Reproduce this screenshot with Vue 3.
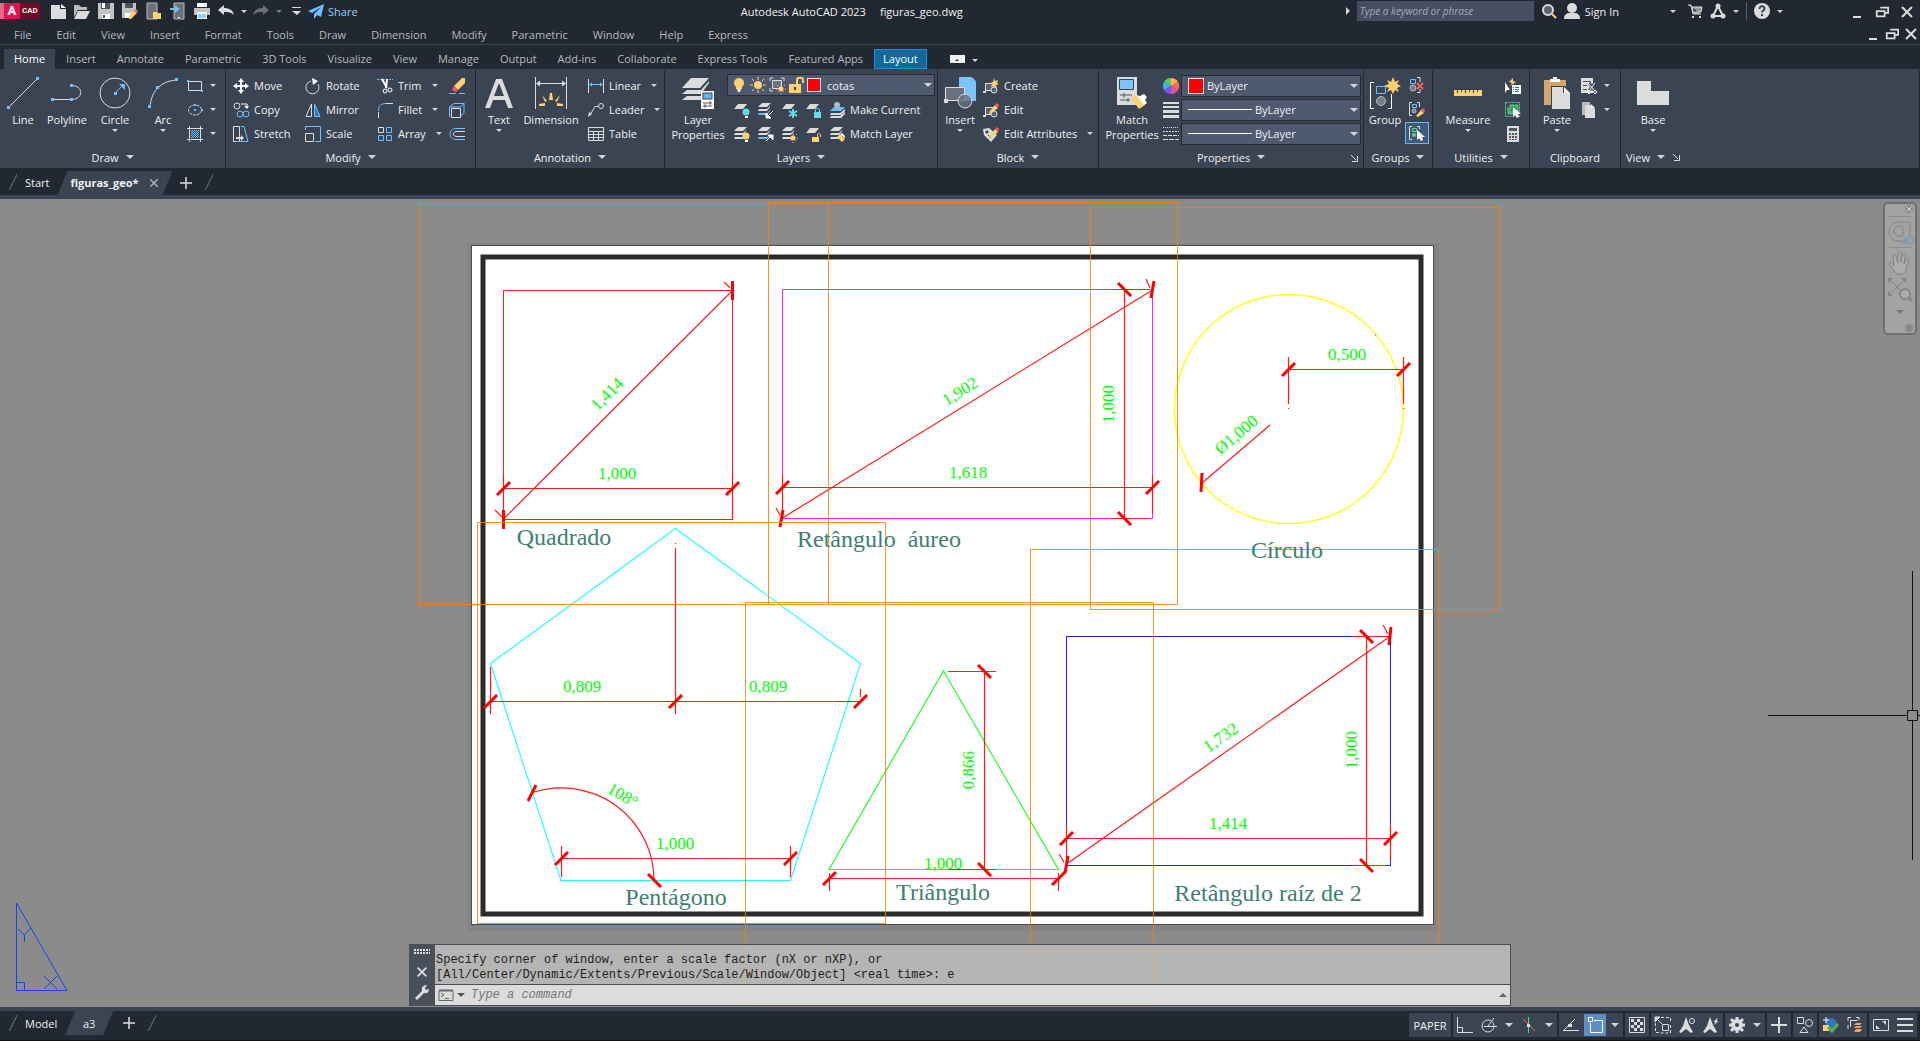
<script setup>
import { h, ref } from 'vue'

const W = '#dcdcdc'
const B = '#6cc0ff'
const Y = '#ffcf70'
const R = '#ff5a5a'
const G = '#5fd38d'

const stack = (c1, c2, c3) =>
  `<path d="M5 1H14L10 5H1Z" fill="${c1}"/><path d="M2 7H10L13 4V5L10 9H1Z" fill="${c2}"/><path d="M2 11H10L13 8V9L10 13H1Z" fill="${c3}"/>`
const single = `<path d="M5 2H14L10 7H1Z" fill="${W}"/>`
const pencil = `<path d="M7 9l5-6 3 3-6 5-3 1z" fill="${Y}"/><path d="M12 3l2-2 2 2-1 3z" fill="${R}"/>`
const cursor = `<path d="M8 5v10l2-2 2 3 2-1-1-3h3z" fill="#fff"/>`
const blockShape = `<rect x="2.500" y="5.500" width="8" height="7" fill="#5b6270" stroke="${W}"/><circle cx="11" cy="12" r="3" fill="#5b6270" stroke="${W}"/><path d="M0 13h3v2H0z" fill="${W}"/>`

const icons = {
  new: `<path d="M1 2h9v4h6v10H1z" fill="${W}"/><path d="M11 1l5 4h-5z" fill="#fff"/>`,
  open: `<path d="M0 14V2h5l2 2h6v3H4z" fill="#b9b9b9"/><path d="M4 8h12l-4 8H0z" fill="${W}"/>`,
  save: `<path d="M0 0h16v16H0z" fill="#c4c4c4"/><path d="M3 0h9v6H3z" fill="#4f545c"/><path d="M4 0h3v5H4zM4 11h8v5H4z" fill="#fff"/><path d="M5 12h2v3H5z" fill="#4f545c"/>`,
  saveas: `<path d="M0 0h14v9l-6 6H0z" fill="#c4c4c4"/><path d="M3 0h8v5H3z" fill="#4f545c"/><path d="M3 10h6v5H3z" fill="#fff"/><path d="M7 13l5-5 3 2-6 6H7z" fill="${Y}"/><path d="M12 8l2-2 2 2-1 2z" fill="${R}"/>`,
  webopen: `<path d="M1 0h10v16H1z" fill="#6d7178" stroke="#b8b8b8"/><path d="M7 9h4l1 1h3v6H7z" fill="${Y}"/>`,
  websave: `<path d="M4 0h10v16H4z" fill="#6d7178" stroke="#b8b8b8"/><path d="M0 5h5V2l5 4-5 4V7H0z" fill="${B}"/><path d="M8 14h2v1H8z" fill="#fff"/>`,
  print: `<path d="M3 0h10v4H3z" fill="#fff"/><path d="M0 5h16v7H0z" fill="#c4c4c4"/><path d="M3 9h10v7H3z" fill="#fff"/><path d="M4 11h8v4H4z" fill="#8ccfff"/>`,
  undo: `<path d="M0 7l6-5v3c5 0 9 2 10 7-3-3-6-3-10-3v3z" fill="${W}"/>`,
  redo: `<path d="M16 7l-6-5v3C5 5 1 7 0 12c3-3 6-3 10-3v3z" fill="#6b7078"/>`,
  custom: `<path d="M4 4h9v1H4zM4 8h9l-4 4z" fill="${W}"/>`,
  share: `<path d="M16 1L0 8l4 2L13 4 6 11v5l3-4 4 2z" fill="${B}"/>`,
  search: `<circle cx="7" cy="7" r="5" fill="#5b6270" stroke="${W}" stroke-width="2"/><path d="M11 11l4 4" stroke="${Y}" stroke-width="2"/>`,
  user: `<circle cx="8" cy="5" r="5" fill="${W}"/><path d="M0 16c0-5 3-6 6-6h4c3 0 6 1 6 6z" fill="${W}"/>`,
  cart: `<path d="M1 2h3l2 9h8M5 4h10l-1 5H6z" fill="#999" stroke="${W}"/><path d="M5 13h2v2H5zM12 13h2v2h-2z" fill="${W}"/>`,
  apps: `<path d="M8 3L3 13h10z" fill="none" stroke="${W}" stroke-width="2"/><circle cx="8" cy="3" r="2.500" fill="${W}"/><circle cx="3" cy="13" r="2.500" fill="${W}"/><circle cx="13" cy="13" r="2.500" fill="${W}"/>`,
  help: `<circle cx="8" cy="8" r="8" fill="${W}"/><path d="M5.500 6c0-4 5-3 5-.5 0 2-2.500 2-2.500 4M8 11v2" fill="none" stroke="#3b4453" stroke-width="2"/>`,
  min: `<path d="M4 12h8v2H4z" fill="${W}"/>`,
  restore: `<path d="M6 3h9v6h-3M2 7h9v6H2z" fill="none" stroke="${W}" stroke-width="2"/>`,
  close: `<path d="M3 3l10 10M13 3L3 13" stroke="${W}" stroke-width="2"/>`,
  line: `<path d="M3 29L29 3" stroke="${W}"/><path d="M0 29h3v3H0zM29 0h3v3h-3z" fill="${B}"/>`,
  polyline: `<path d="M0 22.500h20M20 8.500c13 0 13 14 0 14" fill="none" stroke="${W}"/><path d="M0 21h3v3H0zM19 21h3v3h-3zM19 7h3v3h-3z" fill="${B}"/>`,
  circle: `<circle cx="16" cy="16" r="15" fill="none" stroke="${W}"/><path d="M15 15h3v3h-3zM20 7h6v6z" fill="${B}"/><path d="M17 15l6-6" stroke="${B}"/>`,
  arc: `<path d="M3 30C4 16 12 4 30 3" fill="none" stroke="${W}"/><path d="M1 28h3v3H1zM9 9h3v3H9zM28 1h3v3h-3z" fill="${B}"/>`,
  rect: `<path d="M1.500 3.500h13v9h-13z" fill="none" stroke="${W}"/><path d="M0 2h2v2H0zM14 12h2v2h-2z" fill="${B}"/>`,
  ellipse: `<ellipse cx="8" cy="8" rx="6.500" ry="5" fill="none" stroke="${W}" stroke-dasharray="3 1"/><path d="M7 2h2v2H7zM7 7h2v2H7zM14 7h2v2h-2z" fill="${B}"/>`,
  hatch: `<path d="M2.500 0v16M13.500 0v16M0 2.500h16M0 13.500h16" stroke="${W}"/><path d="M4 8l4-4M4 12l8-8M8 12l4-4M4 6l2-2M4 10l6-6M6 12l6-6M10 12l2-2" stroke="${B}"/>`,
  move: `<path d="M8 0l3 4H9v3h3V5l4 3-4 3V9H9v3h2l-3 4-3-4h2V9H4v2L0 8l4-3v2h3V4H5z" fill="#fff"/>`,
  copy: `<circle cx="4" cy="4" r="3" fill="none" stroke="${W}"/><circle cx="7" cy="12" r="3" fill="none" stroke="${B}"/><circle cx="13" cy="12" r="3" fill="none" stroke="${B}"/><path d="M8 2h6v3" fill="none" stroke="#fff"/><path d="M11 4h5l-2 3z" fill="#fff"/>`,
  stretch: `<path d="M.500 .500h6v15h-6z" fill="none" stroke="${W}"/><path d="M8 .500h3l4 15H3" fill="none" stroke="${B}"/><path d="M3 11h5V9l3 3-3 3v-2H3z" fill="${W}"/>`,
  rotate: `<path d="M6 3a6.500 6.500 0 1 0 7 3" fill="none" stroke="${W}"/><path d="M7 0l6 3-5 4z" fill="#fff"/>`,
  mirror: `<path d="M6.500 2v12.500H1z" fill="none" stroke="${W}"/><path d="M9.500 2v12.500H15z" fill="#2d7ab8" stroke="${B}"/>`,
  scale: `<path d="M.500 4V.500h15v15H10" fill="none" stroke="${B}"/><path d="M.500 7.500h8v8h-8z" fill="none" stroke="${W}"/>`,
  trim: `<path d="M0 1.500h16" stroke="${B}" stroke-dasharray="2 1"/><path d="M5 1l5 9M10 1L9 10" stroke="#fff" stroke-width="2"/><circle cx="8" cy="13" r="2" fill="none" stroke="#fff"/><circle cx="13" cy="12" r="2" fill="none" stroke="#fff"/>`,
  fillet: `<path d="M1.500 10v6M9 1.500h7" stroke="${W}"/><path d="M1.500 9C1.500 4 4 1.500 9 1.500" fill="none" stroke="${B}"/>`,
  array: `<path d="M1.500 1.500h5v5h-5z" fill="none" stroke="${W}"/><path d="M9.500 1.500h5v5h-5zM1.500 9.500h5v5h-5zM9.500 9.500h5v5h-5z" fill="none" stroke="${B}"/>`,
  erase: `<path d="M13 0h3v5l-7 7-4-4z" fill="${Y}"/><path d="M5 8l4 4-2 2-4-2z" fill="${R}"/><path d="M0 15.500h7M10 15.500h6" stroke="${B}"/>`,
  explode: `<path d="M2.500 6.500h9v9h-9z" fill="none" stroke="${W}"/><path d="M.500 5L5 1.500h10v9L12 14M.500 5h11L15 1.500M.500 5v10" fill="none" stroke="${B}"/>`,
  offset: `<path d="M16 2.500H7C-1 2.500-1 13.500 7 13.500h9" fill="none" stroke="${B}"/><path d="M16 5.500H8c-5 0-5 5 0 5h8" fill="none" stroke="${W}"/>`,
  text: `<path d="M13 2h6l11 29h-5l-3-8H10l-3 8H2zM16 6l-5 13h10z" fill="${W}"/>`,
  dimension: `<path d="M.500 0v32M31.500 0v32M2 6.500h28" stroke="${W}"/><path d="M1 6.500l4-3v6zM31 6.500l-4-3v6z" fill="${W}"/><path d="M15 16h2l1 7h-4zM7 18l5 6-2 1zM25 18l-5 6 2 1zM4 27l6-1v3H4zM28 27l-6-1v3h6z" fill="${Y}"/>`,
  linear: `<path d="M.500 1v14M15.500 1v14" stroke="${W}"/><path d="M2 6.500h12" stroke="${B}"/><path d="M1 6.500l3-2v4zM15 6.500l-3-2v4z" fill="${B}"/>`,
  leader: `<circle cx="13" cy="4" r="2.500" fill="none" stroke="${W}"/><path d="M10 4.500H7L2 13" fill="none" stroke="${W}"/><path d="M0 15l1-5 3 2z" fill="${W}"/>`,
  table: `<path d="M.500 1.500h15v13H.500zM.500 5.500h15M.500 8.500h15M.500 11.500h15M5.500 5v9M10.500 5v9" fill="none" stroke="${W}"/>`,
  layerprops: `<path d="M9 1h18l-9 10H0z" fill="${W}"/><path d="M5 13h14l8-9v2l-8 11H0zM5 19h14l4-5v3l-4 6H0z" fill="${W}"/><rect x="19" y="14" width="13" height="18" fill="#fff"/><rect x="21" y="16" width="9" height="6" fill="#5cb6fa" stroke="#3b4453"/><path d="M21 26h9M21 29h9M28 24v4M23 27v4" stroke="#555"/>`,
  bulb: `<circle cx="8" cy="6" r="5" fill="${Y}"/><path d="M5 9h6v3H5z" fill="${Y}"/><path d="M6 12h4l-1 3H7z" fill="#fff"/>`,
  sun: `<circle cx="8" cy="8" r="4" fill="${Y}"/><path d="M8 0v3M8 13v3M0 8h3M13 8h3M2 2l2 2M12 12l2 2M14 2l-2 2M4 12l-2 2" stroke="${Y}"/>`,
  vpsun: `<path d="M1 4V1h3M12 1h3v3M1 11v3h3" fill="none" stroke="${W}"/><path d="M3.500 3.500h9v8h-9z" fill="#6b7383" stroke="${W}"/><circle cx="12" cy="12" r="2.500" fill="${Y}"/><path d="M12 7v10M7 12h10M8 8l8 8M16 8l-8 8" stroke="${Y}" stroke-dasharray="1 2"/>`,
  lock: `<path d="M1 7h12v9H1z" fill="${Y}"/><path d="M9 7V3c0-3 6-3 6 0v3" fill="none" stroke="${Y}" stroke-width="2"/><path d="M6 10h2v3H6z" fill="#3b4453"/>`,
  l1: `${single}<circle cx="13" cy="10" r="3.500" fill="#64dbe8"/><path d="M12 14h3v2h-3z" fill="#fff"/>`,
  l2: `${stack(W, W, B)}<path d="M16 9l-6 6M9 11v5h5z" stroke="#fff" fill="#fff"/>`,
  l3: `${single}<path d="M12 7v9M8 9l8 5M16 9l-8 5" stroke="#64dbe8" stroke-width="2"/>`,
  l4: `${single}<path d="M9 10h7v6H9z" fill="#64dbe8"/><path d="M10.500 10V8c0-2 4-2 4 0v2" fill="none" stroke="#64dbe8"/>`,
  l5: `<path d="M5 5h11l-4 4H1z" fill="${B}"/><circle cx="8" cy="3" r="3" fill="#b9b9b9"/><path d="M2 11h9l5-4v2l-4 4H1zM2 14h9l5-4v2l-4 4H1z" fill="${W}"/>`,
  m1: `${stack(W, W, W)}<circle cx="13" cy="10" r="3.500" fill="${Y}"/><path d="M12 14h3v2h-3z" fill="#fff"/>`,
  m2: `${stack(W, W, B)}<path d="M9 15l6-6M11 9h5v5z" stroke="#fff" fill="#fff"/>`,
  m3: `${stack(W, W, W)}<circle cx="12" cy="12" r="2.500" fill="${Y}"/><path d="M12 7v10M7 12h10M8 8l8 8M16 8l-8 8" stroke="${Y}" stroke-dasharray="1 2"/>`,
  m4: `${single}<path d="M7 11h7v5H7z" fill="${Y}"/><path d="M12.500 11V9c0-2 3-2 3 0v2" fill="none" stroke="${Y}"/>`,
  m5: `${stack(W, W, W)}<path d="M8 11l3-3 5 5-3 3z" fill="${Y}"/><path d="M11 8l2-1 3 3v2z" fill="#fff"/>`,
  insert: `<path d="M15 0h12l5 5v19H15z" fill="#7cc4fb"/><path d="M28 0l4 4h-4z" fill="${B}"/><path d="M1.500 10.500h19v13h-19z" fill="#69707f" stroke="${W}"/><path d="M0 22h4v4H0z" fill="${W}"/><circle cx="21" cy="24" r="7" fill="#69707fcc" stroke="${W}"/>`,
  create: `${blockShape}<path d="M11 0l1 3 3-1-1 3 2 1-3 1 1 3-3-2-3 1 1-3-2-1 3-1z" fill="${Y}"/>`,
  edit: `${blockShape}${pencil}`,
  attr: `<path d="M0 3l6-1 8 7-6 7-7-7z" fill="${W}"/><path d="M3 5h2v2H3zM5 9l3 3" fill="#3b4453" stroke="#3b4453"/>${pencil}`,
  match: `<path d="M1 0h20v28H1z" fill="${W}"/><path d="M3.500 2.500h14v10h-14z" fill="#7cc4fb" stroke="#3b4453"/><path d="M4 18h12M4 23h10M8 16v5M12 21v4" stroke="#555"/><path d="M15 21l5-3 9 10-6 4z" fill="${Y}"/><path d="M20 18l4 1 4-2 3 3-2 3 2 3-3 2z" fill="#fff"/>`,
  wheel: `<path d="M8 8V0A8 8 0 0 1 15 4z" fill="#ffb545"/><path d="M8 8l7-4a8 8 0 0 1 0 8z" fill="#ff6b4e"/><path d="M8 8l7 4a8 8 0 0 1-7 4z" fill="#e0559b"/><path d="M8 8v8a8 8 0 0 1-7-4z" fill="#7b52ff"/><path d="M8 8l-7 4a8 8 0 0 1 0-8z" fill="#36b5e0"/><path d="M8 8L1 4a8 8 0 0 1 7-4z" fill="#5bcb6b"/>`,
  weights: `<path d="M0 1h16M0 5h16" stroke="${W}" stroke-width="2"/><path d="M0 9.500h16M0 14.500h16" stroke="${W}" stroke-width="3"/>`,
  types: `<path d="M0 1.500h16" stroke="${W}" stroke-dasharray="1 1"/><path d="M0 5.500h16" stroke="${W}" stroke-dasharray="2 1"/><path d="M0 9.500h16" stroke="${W}" stroke-dasharray="4 1"/><path d="M0 13.500h16" stroke="${W}" stroke-dasharray="5 1"/>`,
  group: `<path d="M5 5.500H1.500v26H5M19 31.500h3.500V17" fill="none" stroke="#fff"/><path d="M7.500 9.500h9v7h-9z" fill="none" stroke="${B}"/><circle cx="12" cy="24" r="4.500" fill="#777d88" stroke="#bbb"/><path d="M24 0l2 5 4-2-2 4 4 2-4 2 2 4-4-2-2 4-2-4-4 2 2-4-5-2 5-2-2-4 4 2z" fill="${Y}"/>`,
  ungroup: `<path d="M1.500 2.500h5v4h-5z" fill="none" stroke="${B}"/><circle cx="4" cy="11" r="3" fill="#777d88" stroke="#bbb"/><path d="M8 .500h3V5M8 15.500h3V12" fill="none" stroke="${W}"/><path d="M8 6l6 6M14 6l-6 6" stroke="${R}" stroke-width="2"/>`,
  groupedit: `<path d="M3 1.500H.500v13H3M8 1.500h2.500V6" fill="none" stroke="${W}"/><path d="M3.500 3.500h4v3h-4z" fill="none" stroke="${B}"/><circle cx="5" cy="10" r="2" fill="#777d88" stroke="#bbb"/><path d="M7 15l5-6 3 3-6 4z" fill="${Y}"/><path d="M12 9l2-2 2 2-1 3z" fill="${R}"/>`,
  groupsel: `<path d="M3 1.500H.500v13H3M8 1.500h2.500V4" fill="none" stroke="${W}"/><path d="M3.500 3.500h4v3h-4z" fill="none" stroke="${G}"/><circle cx="5" cy="10" r="2" fill="${G}"/>${cursor}`,
  measure: `<path d="M2 13h28v6H2z" fill="${Y}"/><path d="M5.500 13v3M9.500 13v2M13.500 13v3M17.500 13v2M21.500 13v3M25.500 13v2" stroke="#3b4453"/>`,
  qselect: `<path d="M0 4v11l2-3h3z" fill="#fff"/><path d="M8 0L4 4l3 1-2 3 6-4-3-1z" fill="${Y}"/><path d="M7 7h9v9H7z" fill="#fff"/><path d="M8 9.500h1M8 11.500h1M8 13.500h1M10 9.500h4M10 11.500h4M10 13.500h4" stroke="#1e78c8"/>`,
  selall: `<path d="M.500 .500h14v14H.500z" fill="none" stroke="${G}" stroke-dasharray="2 1"/><path d="M5 3h8v7H5zM3 5v7h7" fill="#3a9d64" stroke="${G}"/>${cursor}`,
  calc: `<path d="M2 0h12v16H2z" fill="${W}"/><path d="M4 2h8v3H4zM4 7h2v2H4zM7 7h2v2H7zM10 7h2v2h-2zM4 10h2v2H4zM7 10h2v2H7zM10 10h2v2h-2zM4 13h2v1H4zM7 13h2v1H7zM10 13h2v1h-2z" fill="#555"/>`,
  paste: `<path d="M3 3h22v25H3z" fill="#d5a66a"/><path d="M9 2h3V0h4v2h3v3H9z" fill="#fff"/><path d="M10 9h14l6 6v17H10z" fill="#3b4453"/><path d="M11 10h11v6h7v16H11z" fill="${W}"/><path d="M23 10l6 6h-6z" fill="#fff"/>`,
  cut: `<path d="M0 0h12v15H0z" fill="${W}"/><path d="M2 3.500h8M2 7.500h4M2 11.500h4" stroke="#555"/><path d="M8 5l6 8M14 5l-6 8" stroke="#3b4453" stroke-width="3"/><path d="M7 5l7 8M14 5l-6 8" stroke="#fff"/><circle cx="8" cy="14" r="1.500" fill="none" stroke="#fff"/><circle cx="14" cy="14" r="1.500" fill="none" stroke="#fff"/>`,
  copyclip: `<path d="M1 0h8v3H4v10H1z" fill="#bbb"/><path d="M4 3h6l4 4v9H4z" fill="${W}"/><path d="M10 2l4 4h-4z" fill="#fff"/>`,
  base: `<path d="M0 4h14v10h18v14H0z" fill="${W}"/>`,
  corner: `<path d="M1 1l5 5M2 7.500h5.500V2" fill="none" stroke="${W}"/>`,
  ortho: `<path d="M.500 0v15.500H16M.500 10.500h5v5" fill="none" stroke="${W}"/>`,
  polar: `<circle cx="7" cy="9" r="6" fill="none" stroke="${W}"/><path d="M3 9.500h13M7 9l6-8" stroke="${W}"/>`,
  iso: `<path d="M2 2l12 12" stroke="${R}"/><path d="M7.500 0v16" stroke="${G}"/><path d="M6 7h3v3H6z" fill="${W}"/>`,
  track: `<path d="M0 13.500h16M1 13L12 2" stroke="${W}"/><path d="M5 7h4v3H5z" fill="${W}"/>`,
  osnap: `<path d="M1.500 .500h4v4h-4zM7 3.500h8.500v12h-12V6" fill="none" stroke="#fff"/>`,
  checker: `<path d="M.500 .500h15v15H.500z" fill="none" stroke="${W}"/><path d="M2 2h3v3H2zM8 2h3v3H8zM5 5h3v3H5zM11 5h3v3h-3zM2 8h3v3H2zM8 8h3v3H8zM5 11h3v3H5zM11 11h3v3h-3z" fill="${W}"/>`,
  cycle: `<path d="M6 .500h9.500V5M.500 6v9.500H5" fill="none" stroke="${W}" stroke-dasharray="3 2"/><path d="M7.500 7.500h6v6h-6z" fill="none" stroke="${W}"/><path d="M15.500 8v8H5" fill="none" stroke="${W}" stroke-dasharray="3 2"/><path d="M0 0h5L0 5zM1 1l6 6" fill="${W}" stroke="${W}"/>`,
  anno: `<path d="M7 0l3 8 4 7-2 1-5-4-5 4-2-1 4-6z" fill="${W}"/><circle cx="13" cy="4" r="2.500" fill="none" stroke="${W}"/>`,
  annoauto: `<path d="M7 0l3 8 4 7-2 1-5-4-5 4-2-1 4-6z" fill="${W}"/><path d="M15 0l-5 5h2l-2 4 6-5h-2z" fill="${W}" stroke="#3b4453" stroke-width=".5"/>`,
  gear: `<circle cx="8" cy="8" r="4" fill="none" stroke="${W}" stroke-width="4"/><path d="M8 0v3M8 13v3M0 8h3M13 8h3M2 2l3 3M11 11l3 3M14 2l-3 3M5 11l-3 3" stroke="${W}" stroke-width="3"/>`,
  plus: `<path d="M7 0h2v7h7v2H9v7H7V9H0V7h7z" fill="${W}"/>`,
  isolate: `<path d="M.500 .500h6v6h-6z" fill="none" stroke="${W}"/><circle cx="12" cy="6" r="3.500" fill="none" stroke="${W}"/><path d="M7 10l4 5.500H3z" fill="none" stroke="${W}"/>`,
  hardware: `<circle cx="8" cy="7" r="6" fill="#2f76bd"/><path d="M0 8h6v6H0z" fill="${Y}"/><path d="M5 10l4 4 6-7" fill="none" stroke="#55b04e" stroke-width="3"/><path d="M3 0v6M0 3h6" stroke="#fff"/>`,
  vplayers: `<path d="M1 4V.500h3M9 .500h3V3M1 8v4" fill="none" stroke="${W}"/><path d="M3.500 10V3.500h7" fill="none" stroke="${W}"/><path d="M9 6h6l-2 2H7zM9 9h6l-2 2H7zM9 12h6l-2 3H7z" fill="#f2a06a"/>`,
  clean: `<path d="M.500 2.500h15v11H.500z" fill="none" stroke="${W}"/><path d="M9 4h4v4zM3 8l4 4H3z" fill="${W}"/>`,
  menu: `<path d="M0 2h16M0 8h16M0 14h16" stroke="${W}" stroke-width="2"/>`,
  wrench: `<path d="M1 14l7-7c-1-4 2-6 5-6l-2 3 1 2 3-1c0 3-2 5-5 4l-7 7z" fill="${W}"/>`,
  dots: `<path d="M0 6h16M0 9h16" stroke="${W}" stroke-width="2" stroke-dasharray="2 1"/>`,
  console: `<path d="M1 3.500h14v10H1z" fill="none" stroke="#666"/><path d="M1 3.500h14" stroke="#666" stroke-width="2"/><path d="M3 6l3 2-3 2M7 11.500h4" fill="none" stroke="#666"/>`,
  wheel2d: `<path d="M10 1h10c2 0 2 1 2 3v9c-1 8-7 7-11 7C-2 20-2 2 10 1z" fill="none" stroke="#858585"/><circle cx="11" cy="10" r="5" fill="none" stroke="#858585"/>`,
  hand: `<path d="M9 23C5 19 3 16 1 13c0-2 3-1 5 2L5 5c1-2 3-1 3 1l2 6V2c1-2 3-1 3 0v9l2-8c1-1 3 0 2 2l-1 8 3-6c2-1 3 1 2 2l-3 8c0 4-2 6-3 6z" fill="#adadad" stroke="#858585"/>`,
  extents: `<path d="M2 2l14 14M16 2L2 16" stroke="#858585"/><path d="M0 0h5L0 5zM18 0h-5l5 5zM0 18h5l-5-5z" fill="#858585"/><circle cx="17" cy="16" r="5" fill="#adadad" stroke="#858585" stroke-width="2"/><path d="M20 19l4 4" stroke="#858585" stroke-width="3"/>`,
}

const Icon = (props) =>
  h('svg', {
    class: 'icon',
    width: props.s || 16,
    height: props.s || 16,
    viewBox: `0 0 ${props.v || props.s || 16} ${props.v || props.s || 16}`,
    'aria-hidden': 'true',
    innerHTML: icons[props.n],
  })
Icon.props = ['n', 's', 'v']

const quick = ['new', 'open', 'save', 'saveas', 'webopen', 'websave', 'print', 'undo']
const menus = ['File', 'Edit', 'View', 'Insert', 'Format', 'Tools', 'Draw', 'Dimension', 'Modify', 'Parametric', 'Window', 'Help', 'Express']
const tabs = ['Home', 'Insert', 'Annotate', 'Parametric', '3D Tools', 'Visualize', 'View', 'Manage', 'Output', 'Add-ins', 'Collaborate', 'Express Tools', 'Featured Apps', 'Layout']

const modify = [
  [['move', 'Move'], ['copy', 'Copy'], ['stretch', 'Stretch']],
  [['rotate', 'Rotate'], ['mirror', 'Mirror'], ['scale', 'Scale']],
  [['trim', 'Trim', 1], ['fillet', 'Fillet', 1], ['array', 'Array', 1]],
]
const annotate = [['linear', 'Linear', 1], ['leader', 'Leader', 1], ['table', 'Table']]
const block = [['create', 'Create'], ['edit', 'Edit'], ['attr', 'Edit Attributes', 1]]

const status = [
  ['ortho', 'polar', 'v', 'iso', 'v'],
  ['track', 'osnap', 'v'],
  ['checker'],
  ['cycle', 'anno', 'annoauto'],
  ['gear', 'v'],
  ['plus'],
  ['isolate'],
  ['hardware', 'vplayers'],
  ['clean', 'menu'],
]

const keyword = ref('')
const command = ref('')

// Drawing sheet: viewport frames, tick marks, dimension values and captions
const viewports = [
  [419, 203, 409, 401],
  [768, 202, 409, 402],
  [1090, 207, 409, 402],
  [477, 522, 408, 401],
  [745, 602, 408, 402],
  [1030, 549, 408, 402],
]
const slashTicks = [
  [503, 488], [732, 488], [782, 487], [1152, 487], [1288, 369], [1403, 369],
  [490, 701], [675, 701], [860, 701], [561, 858], [790, 858],
  [829, 878], [1058, 878], [1066, 838], [1390, 838],
]
const backTicks = [[1124, 289], [1124, 518], [984, 671], [984, 869], [1366, 636], [1366, 865], [654, 880]]
const values = [
  ['1,414', 611, 398, -45], ['1,000', 617, 479, 0], ['1,902', 963, 396, -32], ['1,618', 968, 478, 0],
  ['1,000', 1114, 404, -90], ['0,500', 1347, 360, 0], ['Ø1,000', 1240, 439, -40],
  ['0,809', 582, 692, 0], ['0,809', 768, 692, 0], ['108°', 620, 800, 30], ['1,000', 675, 849, 0],
  ['0,866', 974, 770, -90], ['1,000', 943, 869, 0],
  ['1,732', 1224, 742, -35], ['1,414', 1228, 829, 0], ['1,000', 1357, 750, -90],
]
const captions = [
  ['Quadrado', 564, 545], ['Retângulo\u00a0 áureo', 879, 547], ['Círculo', 1287, 558],
  ['Pentágono', 676, 905], ['Triângulo', 943, 900], ['Retângulo raíz de 2', 1268, 901],
]
</script>

<template>
  <div class="app">
    <header class="titlebar">
      <div class="logo"><b>A</b><span>CAD</span></div>
      <div class="quick">
        <button v-for="q in quick" :key="q" :aria-label="q"><Icon :n="q" /></button>
        <i class="caret"></i>
        <button aria-label="redo"><Icon n="redo" /></button>
        <i class="caret dim"></i>
        <button aria-label="customize"><Icon n="custom" /></button>
        <button class="share"><Icon n="share" />Share</button>
      </div>
      <div class="doc"><span>Autodesk AutoCAD 2023</span><span>figuras_geo.dwg</span></div>
      <div class="account">
        <i class="play"></i>
        <input v-model="keyword" class="keyword" aria-label="Search" placeholder="Type a keyword or phrase" />
        <button aria-label="search"><Icon n="search" /></button>
        <button class="signin"><Icon n="user" />Sign In<i class="caret"></i></button>
        <button aria-label="cart"><Icon n="cart" /></button>
        <button aria-label="apps"><Icon n="apps" /></button>
        <i class="caret"></i>
        <span class="rule"></span>
        <button aria-label="help"><Icon n="help" /></button>
        <i class="caret"></i>
      </div>
      <div class="window">
        <button aria-label="minimize"><Icon n="min" /></button>
        <button aria-label="restore"><Icon n="restore" s="14" v="16" /></button>
        <button aria-label="close"><Icon n="close" /></button>
      </div>
    </header>

    <nav class="menubar">
      <a v-for="m in menus" :key="m" href="#">{{ m }}</a>
      <div class="window small">
        <button aria-label="minimize drawing"><Icon n="min" /></button>
        <button aria-label="restore drawing"><Icon n="restore" s="14" v="16" /></button>
        <button aria-label="close drawing"><Icon n="close" /></button>
      </div>
    </nav>

    <nav class="tabs">
      <button v-for="t in tabs" :key="t" :class="{ home: t === 'Home', layout: t === 'Layout' }">{{ t }}</button>
      <button class="toggle" aria-label="Minimize ribbon"><span><i></i></span></button>
      <i class="caret"></i>
    </nav>

    <main class="ribbon">
      <section class="panel draw">
        <div class="body">
          <button class="big w40"><Icon n="line" s="32" />Line</button>
          <button class="big w48"><Icon n="polyline" s="32" />Polyline</button>
          <button class="big w48"><Icon n="circle" s="32" />Circle<i class="caret"></i></button>
          <button class="big w48"><Icon n="arc" s="32" />Arc<i class="caret"></i></button>
          <div class="col">
            <button v-for="n in ['rect', 'ellipse', 'hatch']" :key="n" class="tool" :aria-label="n"><Icon :n="n" /><i class="caret"></i></button>
          </div>
        </div>
        <h2>Draw<i class="drop"></i></h2>
      </section>

      <section class="panel modify">
        <div class="body">
          <div v-for="(c, i) in modify" :key="i" class="col w72">
            <button v-for="t in c" :key="t[0]" class="tool"><Icon :n="t[0]" />{{ t[1] }}<i v-if="t[2]" class="caret"></i></button>
          </div>
          <div class="col">
            <button v-for="n in ['erase', 'explode', 'offset']" :key="n" class="tool" :aria-label="n"><Icon :n="n" /></button>
          </div>
        </div>
        <h2>Modify<i class="drop"></i></h2>
      </section>

      <section class="panel annotation">
        <div class="body">
          <button class="big w40"><Icon n="text" s="32" />Text<i class="caret"></i></button>
          <button class="big w64"><Icon n="dimension" s="32" />Dimension</button>
          <div class="col">
            <button v-for="t in annotate" :key="t[0]" class="tool"><Icon :n="t[0]" />{{ t[1] }}<i v-if="t[2]" class="caret"></i></button>
          </div>
        </div>
        <h2>Annotation<i class="drop"></i></h2>
      </section>

      <section class="panel layers">
        <div class="body">
          <button class="big w60"><Icon n="layerprops" s="32" />Layer<br />Properties</button>
          <div class="stack">
            <div class="combo icons">
              <Icon n="bulb" /><Icon n="sun" /><Icon n="vpsun" /><Icon n="lock" /><i class="swatch"></i>
              <select aria-label="Layer"><option>cotas</option></select>
            </div>
            <div class="strip">
              <button v-for="n in ['l1', 'l2', 'l3', 'l4']" :key="n" :aria-label="n"><Icon :n="n" /></button>
              <button class="tool"><Icon n="l5" />Make Current</button>
            </div>
            <div class="strip">
              <button v-for="n in ['m1', 'm2', 'm3', 'm4']" :key="n" :aria-label="n"><Icon :n="n" /></button>
              <button class="tool"><Icon n="m5" />Match Layer</button>
            </div>
          </div>
        </div>
        <h2>Layers<i class="drop"></i></h2>
      </section>

      <section class="panel block">
        <div class="body">
          <button class="big w40"><Icon n="insert" s="32" />Insert<i class="caret"></i></button>
          <div class="col">
            <button v-for="t in block" :key="t[0]" class="tool"><Icon :n="t[0]" />{{ t[1] }}<i v-if="t[2]" class="caret"></i></button>
          </div>
        </div>
        <h2>Block<i class="drop"></i></h2>
      </section>

      <section class="panel properties">
        <div class="body">
          <button class="big w60"><Icon n="match" s="32" />Match<br />Properties</button>
          <div class="stack">
            <div class="prop"><Icon n="wheel" /><div class="combo"><i class="swatch"></i><select aria-label="Color"><option>ByLayer</option></select></div></div>
            <div class="prop"><Icon n="weights" /><div class="combo"><i class="sample"></i><select aria-label="Lineweight"><option>ByLayer</option></select></div></div>
            <div class="prop"><Icon n="types" /><div class="combo"><i class="sample"></i><select aria-label="Linetype"><option>ByLayer</option></select></div></div>
          </div>
        </div>
        <h2>Properties<i class="drop"></i><Icon class="launch" n="corner" s="8" /></h2>
      </section>

      <section class="panel groups">
        <div class="body">
          <button class="big w40"><Icon n="group" s="32" />Group</button>
          <div class="col">
            <button class="tool sq" aria-label="ungroup"><Icon n="ungroup" /></button>
            <button class="tool sq" aria-label="edit group"><Icon n="groupedit" /></button>
            <button class="tool sq on" aria-label="group selection"><Icon n="groupsel" /></button>
          </div>
        </div>
        <h2>Groups<i class="drop"></i></h2>
      </section>

      <section class="panel utilities">
        <div class="body">
          <button class="big w64"><Icon n="measure" s="32" />Measure<i class="caret"></i></button>
          <div class="col">
            <button v-for="n in ['qselect', 'selall', 'calc']" :key="n" class="tool" :aria-label="n"><Icon :n="n" /></button>
          </div>
        </div>
        <h2>Utilities<i class="drop"></i></h2>
      </section>

      <section class="panel clipboard">
        <div class="body">
          <button class="big w48"><Icon n="paste" s="32" />Paste<i class="caret"></i></button>
          <div class="col">
            <button v-for="n in ['cut', 'copyclip']" :key="n" class="tool" :aria-label="n"><Icon :n="n" /><i class="caret"></i></button>
          </div>
        </div>
        <h2>Clipboard</h2>
      </section>

      <section class="panel view">
        <div class="body">
          <button class="big w60"><Icon n="base" s="32" />Base<i class="caret"></i></button>
        </div>
        <h2>View<i class="drop"></i><Icon n="corner" s="8" /></h2>
      </section>
    </main>

    <nav class="files">
      <span class="slash"></span>
      <button>Start</button>
      <button class="slant active">figuras_geo*<Icon n="close" s="12" v="16" /></button>
      <button class="add" aria-label="New tab"><Icon n="plus" s="12" v="16" /></button>
      <span class="slash"></span>
    </nav>

    <div class="stage">
      <svg class="sheet" viewBox="0 199 1920 808" role="img" aria-label="figuras_geo">
        <rect x="467" y="243" width="972" height="688" fill="#7d7d7d" opacity=".5" />
        <rect x="471.500" y="245.500" width="962" height="679" fill="#fff" stroke="#4a4a4a" />
        <rect x="483" y="257" width="938" height="657" fill="none" stroke="#2c2c2c" stroke-width="5" />

        <g fill="none" shape-rendering="crispEdges">
          <rect x="782" y="289" width="370" height="229" stroke="#ff20ff" />
          <rect x="503" y="290" width="229" height="229" stroke="#ff1a1a" />
          <rect x="1066" y="636" width="324" height="229" stroke="#2020ff" />
        </g>
        <circle cx="1289" cy="409" r="114.500" fill="none" stroke="#ffff20" stroke-width="1.500" />
        <path d="M675.500 528.500L860.500 663.500L790.500 880.500H561L490.500 663.500Z" fill="none" stroke="#20ffff" stroke-width="1.200" />
        <path d="M943.500 671L1058.500 869.500H829Z" fill="none" stroke="#20ff20" stroke-width="1.200" />

        <g class="dims">
          <path d="M503.500 519L732.500 290.500M503.500 488.500H732.500M503.500 476V519M732.500 476V519M724 282l6 6M495 510l7 7" />
          <path d="M782.500 518L1152.500 290M782.500 487.500H1152.500M782.500 475V518M1152.500 475V514M1124.500 289V518M1111 289.500H1148M1111 518.500H1148M1146 279l4 9M776 508l4 7" />
          <path d="M1288.500 369.500H1403.500M1288.500 357V404M1403.500 357V404M1288.500 408V409M1403.500 408V409M1270 425L1202 483M1375 335h1" />
          <path d="M490.500 701.500H860.500M490.500 667V714M675.500 548V714M675.500 543V544M860.500 689V697M561.500 858.500H790.500M561.500 846V877M790.500 846V877" />
          <path d="M532.500 792.500A92.500 92.500 0 0 1 654 880" />
          <path d="M829.500 878.500H1058.500M829.500 873V891M1058.500 873V891M984.500 671V869M948 671.500H996M948 869.500H996" />
          <path d="M1066.500 864L1390.500 636M1066.500 838.500H1390.500M1066.500 825V861M1390.500 825V861M1366.500 636V865M1353 636.500H1388M1353 865.500H1387M1383 625l5 9M1059 854l5 8" />
        </g>
        <g class="ticks">
          <path v-for="(t, i) in slashTicks" :key="'s' + i" :d="`M${t[0] - 6} ${t[1] + 7}l13 -13`" />
          <path v-for="(t, i) in backTicks" :key="'b' + i" :d="`M${t[0] - 6} ${t[1] - 6}l13 13`" />
          <path d="M732.500 281v19M503.500 510v19M1154 281l-3 17M783 510l-3 17M1202 473l-1 19M536 785l-8 16M1391 627l-2 18M1068 856l-3 17" />
        </g>
        <g class="frames">
          <rect v-for="(v, i) in viewports" :key="i" :x="v[0]" :y="v[1]" :width="v[2]" :height="v[3]" />
        </g>
        <g class="values">
          <text v-for="(v, i) in values" :key="i" :x="v[1]" :y="v[2]" :transform="`rotate(${v[3]} ${v[1]} ${v[2]})`">{{ v[0] }}</text>
        </g>
        <g class="captions">
          <text v-for="c in captions" :key="c[0]" :x="c[1]" :y="c[2]">{{ c[0] }}</text>
        </g>
      </svg>

      <svg class="ucs" width="52" height="90" viewBox="0 0 52 90" aria-hidden="true">
        <path d="M.5 1V88.500H51ZM.5 80.500H8.500V88M2 27l6 6 7-7M8.500 33v7M28 74l13 13M41 74L28 87" fill="none" stroke="#1446f0" />
      </svg>

      <svg class="cross" width="152" height="290" viewBox="0 0 152 290" aria-hidden="true">
        <path d="M0 145.500H139M144.500 1V140M144.500 151V290M139.500 140.500h10v10h-10zM150 145.500h2" fill="none" stroke="#111" />
      </svg>

      <aside class="navbar">
        <button class="knob" aria-label="Close navigation bar"><Icon n="close" s="8" v="16" /></button>
        <button class="wheel" aria-label="Steering wheel"><Icon n="wheel2d" s="24" /><span>2D</span></button>
        <button aria-label="Pan"><Icon n="hand" s="24" /></button>
        <button aria-label="Zoom extents"><Icon n="extents" s="24" /></button>
        <i class="drop"></i>
        <button class="knob" aria-label="Navigation options"></button>
      </aside>

      <section class="cmd">
        <div class="grip"><Icon n="dots" /><Icon n="close" s="14" v="16" /><Icon n="wrench" /></div>
        <div class="console">
          <p>Specify corner of window, enter a scale factor (nX or nXP), or<br />[All/Center/Dynamic/Extents/Previous/Scale/Window/Object] &lt;real time&gt;: e</p>
          <div class="entry">
            <Icon n="console" /><i class="drop"></i>
            <input v-model="command" aria-label="Command" placeholder="Type a command" />
            <i class="up"></i>
          </div>
        </div>
      </section>
    </div>

    <footer class="statusbar">
      <nav class="layouts">
        <span class="slash"></span>
        <button>Model</button>
        <button class="slant">a3</button>
        <button class="add" aria-label="New layout"><Icon n="plus" s="12" v="16" /></button>
        <span class="slash"></span>
      </nav>
      <button class="paper">PAPER</button>
      <div v-for="(g, i) in status" :key="i" class="cluster">
        <template v-for="(n, j) in g" :key="j">
          <button v-if="n === 'v'" class="narrow" aria-label="options"><i class="drop"></i></button>
          <button v-else :class="{ on: n === 'osnap' }" :aria-label="n"><Icon :n="n" /></button>
        </template>
      </div>
    </footer>
  </div>
</template>

<style>
body { margin: 0; background: #222831; }
.icon { display: block; flex: none; overflow: visible; }
</style>

<style scoped>
.app {
  display: flex;
  flex-direction: column;
  min-height: 100vh;
  background: #222831;
  color: #f0f0f0;
  font: 11px/15px "Open Sans", "Noto Sans", sans-serif;
}
button, input, select { font: inherit; color: inherit; background: none; border: 0; padding: 0; margin: 0; border-radius: 0; }
button { display: flex; align-items: center; white-space: nowrap; }
a { color: inherit; text-decoration: none; }
h2, p { margin: 0; font: inherit; }

.caret { flex: none; width: 0; height: 0; border: 3px solid transparent; border-top-color: #d4d4d4; border-bottom: 0; }
.caret.dim { border-top-color: #777c85; }
.drop { flex: none; width: 0; height: 0; border: 4px solid transparent; border-top-color: #d4d4d4; border-bottom: 0; }
.slash { width: 8px; height: 16px; margin-right: 8px; align-self: center; background: linear-gradient(116deg, transparent 46%, #555d6a 46%, #555d6a 56%, transparent 56%); }

.titlebar { display: flex; height: 24px; align-items: flex-start; }
.logo { display: flex; align-items: center; width: 40px; height: 16px; margin: 3px 10px 0 0; background: #700a28; font: bold 8px/16px "Roboto", sans-serif; }
.logo b { width: 16px; padding-left: 4px; background: #e51050; font-size: 13px; text-align: center; box-shadow: inset 4px 0 #f2628a; }
.logo span { padding-left: 2px; }
.quick { display: flex; align-items: center; gap: 8px; height: 22px; }
.quick .caret { margin: 0 -2px 0 -1px; }
.share { gap: 4px; margin-left: -4px; color: #8fd0f7; }
.doc { display: flex; flex: 1; justify-content: center; gap: 14px; padding-top: 4px; }
.account { display: flex; align-items: center; gap: 7px; height: 22px; }
.play { border: 4px solid transparent; border-left-color: #d4d4d4; border-right: 0; }
.keyword { width: 174px; height: 20px; padding-left: 3px; background: #454f61; font-style: italic; font-size: 10px; }
.keyword::placeholder { color: #a4abb6; opacity: 1; }
.signin { gap: 5px; }
.signin .caret { margin: 0 4px 0 46px; }
.rule { width: 1px; height: 18px; background: #555d6a; }
.window { display: flex; align-items: center; gap: 10px; height: 24px; margin: 0 5px 0 66px; }

.menubar { display: flex; align-items: center; gap: 25px; height: 20px; padding-left: 14px; border-bottom: 1px solid #3b4453; color: #b6b9be; }
.window.small { gap: 4px; height: 20px; margin: 0 1px 0 auto; }

.tabs { display: flex; align-items: flex-end; gap: 1px; height: 24px; padding-left: 4px; color: #b6b9be; }
.tabs button { height: 20px; padding: 0 10px 2px; }
.tabs .home { background: #3b4453; color: #fff; }
.tabs .layout { padding: 0 8px 1px; background: #14679a; border: 1px solid #1193dd; color: #fff; }
.tabs .toggle { padding: 0 6px 0 22px; }
.toggle span { width: 15px; padding: 2px 0; background: #efefef; display: flex; justify-content: center; }
.toggle i { border: 2px solid transparent; border-bottom-color: #333; border-top: 0; height: 2px; }
.tabs > .caret { margin-bottom: 7px; }

.ribbon { display: flex; height: 99px; background: #3b4453; }
.panel { display: flex; flex-direction: column; flex: none; box-sizing: border-box; height: 98px; margin-top: 1px; border-right: 1px solid #222831; padding: 4px 0 1px; }
.draw { width: 226px; }
.modify { width: 250px; }
.annotation { width: 189px; }
.layers { width: 273px; }
.block { width: 161px; }
.properties { width: 265px; }
.groups { width: 69px; }
.utilities { width: 97px; }
.clipboard { width: 91px; }
.view { flex: 1; }
.body { display: flex; flex: 1; padding-left: 3px; }
.modify .body { padding-left: 7px; }
.panel h2 { position: relative; display: flex; align-items: center; justify-content: center; gap: 7px; height: 20px; }
.panel.view h2 { justify-content: flex-start; padding-left: 5px; }
.launch { position: absolute; right: 5px; bottom: 5px; }
.big { flex: none; flex-direction: column; padding-top: 3px; text-align: center; }
.big svg { margin-bottom: 3px; }
.big .caret { margin-top: 2px; }
.w40 { width: 40px; }
.w48 { width: 48px; }
.w60 { width: 58px; }
.w64 { width: 64px; }
.col { display: flex; flex-direction: column; }
.w72 { width: 72px; }
.tool { flex: none; gap: 5px; height: 24px; padding-bottom: 1px; box-sizing: border-box; }
.tool .caret { margin-left: 5px; }
.draw .tool .caret, .clipboard .tool .caret { margin-left: 2px; }
.tool.sq { justify-content: center; width: 24px; height: 22px; margin-bottom: 2px; }
.annotation .col, .utilities .col { padding-left: 5px; }
.block .col { padding-left: 3px; }
.groups .body { padding-left: 1px; }
.block .body { padding-left: 2px; }
.tool.on { border: 1px solid #6cb6f5; background: #3f5b78; }
.layers .body, .properties .body { padding-left: 4px; }
.layers .strip { display: flex; gap: 8px; padding-left: 6px; }
.stack { display: flex; flex: 1; flex-direction: column; margin-right: 2px; }
.properties .stack { padding-left: 2px; }
.strip button { height: 24px; padding-bottom: 1px; box-sizing: border-box; }
.combo { display: flex; flex: 1; align-items: center; box-sizing: border-box; height: 22px; margin-bottom: 2px; padding-left: 6px; border: 1px solid #262c37; background: #4f5a6e; position: relative; }
.combo.icons { flex: none; gap: 3px; padding-left: 3px; }
.combo::after { content: ""; position: absolute; right: 2px; top: 8px; border: 4px solid transparent; border-top-color: #d4d4d4; border-bottom: 0; pointer-events: none; }
.combo select { flex: 1; appearance: none; outline: 0; padding-left: 1px; }
.swatch { flex: none; width: 12px; height: 12px; border: 1px solid #e4e4e4; background: #f00; }
.prop .swatch { width: 14px; height: 14px; }
.sample { width: 64px; height: 1px; background: #fff; }
.prop { display: flex; align-items: center; gap: 2px; height: 24px; padding-bottom: 1px; box-sizing: border-box; }
.prop .combo { margin: 0; }
.combo .swatch + select { padding-left: 3px; }
.prop select { padding-left: 3px; }

.files { display: flex; align-items: flex-end; height: 27px; padding-left: 9px; border-bottom: 4px solid #3b4453; }
.files button { height: 24px; padding-bottom: 1px; box-sizing: border-box; }
.slant { justify-content: center; clip-path: polygon(10px 0, 100% 0, calc(100% - 10px) 100%, 0 100%); background: #3b4453; }
.slant.active { gap: 9px; width: 115px; margin: 0 8px 0 8px; font-weight: 700; }
.active svg { opacity: .7; }
.add { margin: 0 13px 0 0; }

.stage { position: relative; flex: 1; min-height: 400px; background: #8b8b8b; overflow: hidden; display: flex; }
.sheet { flex: 1; width: 100%; }
.dims { fill: none; stroke: #ff1a1a; stroke-width: 1.2px; }
.ticks { fill: none; stroke: #f00; stroke-width: 3px; }
.frames { fill: none; stroke: #ff8000; opacity: .85; shape-rendering: crispEdges; }
.values { fill: #0f0; font: 17px "Liberation Serif", serif; text-anchor: middle; }
.captions { fill: #3d7f70; font: 24px "Liberation Serif", serif; text-anchor: middle; }
.ucs { position: absolute; left: 16px; bottom: 15px; }
.cross { position: absolute; right: 0; top: 371px; }

.navbar { position: absolute; top: 3px; right: 3px; display: flex; flex-direction: column; align-items: center; gap: 3px; box-sizing: border-box; width: 34px; padding: 1px 0; border: 2px solid #6f6f6f; border-radius: 5px; background: #a3a3a3; }
.knob { justify-content: center; align-self: flex-end; width: 8px; height: 8px; margin-right: 2px; border-radius: 4px; background: #8a8a8a; }
.wheel { position: relative; padding: 4px 0 2px; border-bottom: 1px solid #8f8f8f; border-top: 1px solid #8f8f8f; }
.wheel span { position: absolute; right: -2px; bottom: 0; color: #7f9db8; font: bold 10px "Open Sans", sans-serif; }
.navbar .drop { margin: 5px 0 7px; border-top-color: #777; }

.cmd { position: absolute; left: 409px; right: 409px; bottom: 1px; display: flex; min-height: 62px; }
.grip { display: flex; flex-direction: column; align-items: center; justify-content: space-between; box-sizing: border-box; width: 25px; padding: 0 0 6px; background: #4a505b; }
.console { display: flex; flex: 1; flex-direction: column; border: 1px solid #4a4e55; }
.console p { flex: 1; padding: 8px 1px 0; background: rgba(199, 199, 199, .7); color: #222; font: 12px/15px "Liberation Mono", monospace; }
.entry { display: flex; align-items: center; gap: 3px; height: 20px; padding: 0 3px; border-top: 1px solid #4a4e55; background: rgba(240, 240, 240, .8); }
.entry .drop { border-top-color: #555; }
.entry input { flex: 1; height: 20px; padding-left: 3px; outline: 0; color: #333; font: italic 12px "Liberation Mono", monospace; }
.entry input::placeholder { color: #777; opacity: 1; }
.up { border: 4px solid transparent; border-bottom-color: #666; border-top: 0; }

.statusbar { display: flex; align-items: flex-start; gap: 2px; box-sizing: border-box; height: 34px; padding-right: 3px; border-top: 4px solid #3b4453; border-bottom: 1px solid #111; }
.layouts { display: flex; flex: 1; height: 24px; padding-left: 9px; }
.layouts .slant { width: 48px; margin: 0 10px 0 8px; }
.statusbar .paper { justify-content: center; }
.paper, .cluster { height: 24px; margin-top: 2px; background: #3b4453; }
.paper { width: 42px; }
.cluster { display: flex; }
.cluster button { justify-content: center; width: 24px; height: 24px; }
.cluster .narrow { width: 16px; }
.cluster .on { height: 22px; width: 22px; margin: 1px; background: #5c8dc4; }
</style>
